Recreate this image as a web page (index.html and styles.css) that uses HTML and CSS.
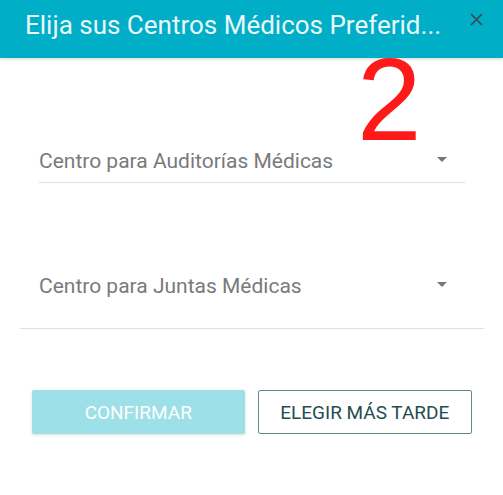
FILE: index.html
```html
<!DOCTYPE html>
<html lang="es">
<head>
<meta charset="utf-8">
<title>Centros Médicos</title>
<link rel="stylesheet" href="styles.css">
</head>
<body>
<div class="dialog">
  <header class="bar">
    <h1 class="title">Elija sus Centros Médicos Preferid...</h1>
    <button class="close" aria-label="Cerrar">
      <svg width="13" height="13" viewBox="0 0 13 13"><path d="M1 1 L12 12 M12 1 L1 12" stroke="#3d4a4d" stroke-width="1.7" fill="none"/></svg>
    </button>
  </header>
  <span class="annot">2</span>
  <main class="content">
    <div class="field field-first">
      <span class="placeholder">Centro para Auditorías Médicas</span>
      <svg class="caret" width="10" height="5" viewBox="0 0 10 5"><path d="M0 0 H10 L5 5 Z" fill="#777"/></svg>
    </div>
    <div class="field field-second">
      <span class="placeholder">Centro para Juntas Médicas</span>
      <svg class="caret" width="10" height="5" viewBox="0 0 10 5"><path d="M0 0 H10 L5 5 Z" fill="#777"/></svg>
    </div>
    <div class="actions">
      <button class="btn btn-primary">CONFIRMAR</button>
      <button class="btn btn-outline">ELEGIR MÁS TARDE</button>
    </div>
  </main>
</div>
</body>
</html>
```
FILE: styles.css
```css
html, body {
  margin: 0;
  padding: 0;
  background: #fff;
}
body {
  font-family: Roboto, "Noto Sans", sans-serif;
}
.dialog {
  position: relative;
  width: 503px;
  min-height: 495px;
  background: #fff;
}
.bar {
  height: 58px;
  background: #00aec7;
  display: flex;
  align-items: center;
  padding: 0 20px 0 25px;
  box-sizing: border-box;
  box-shadow: 0 1px 3px rgba(0,0,0,0.18);
  position: relative;
  z-index: 1;
}
.title {
  margin: 0;
  flex: 1;
  font-weight: 400;
  font-size: 26px;
  line-height: 30px;
  color: #e9f7f9;
  white-space: nowrap;
  margin-top: -8px;
}
.close {
  border: 0;
  background: none;
  padding: 0;
  width: 13px;
  height: 13px;
  margin-top: -20px;
  display: flex;
}
.annot {
  position: absolute;
  left: 357px;
  top: 42px;
  z-index: 2;
  font-family: "Liberation Sans", Arial, sans-serif;
  font-size: 116px;
  line-height: 1;
  color: #ff1a1a;
}
.content {
  display: flex;
  flex-direction: column;
}
.field {
  display: flex;
  justify-content: space-between;
  align-items: flex-start;
  border-bottom: 1px solid #e0e0e0;
}
.placeholder {
  font-size: 21px;
  line-height: 24px;
  color: #7a7a7a;
}
.caret {
  margin-top: 8px;
}
.field-first {
  margin: 91px 38px 0 39px;
  padding: 0 18px 9px 0;
}
.field-second {
  margin: 91px 19px 0 20px;
  padding: 0 37px 30px 19px;
}
.actions {
  display: flex;
  gap: 13px;
  margin: 61px 31px 0 32px;
}
.btn {
  height: 44px;
  flex: 1;
  font-family: Roboto, "Noto Sans", sans-serif;
  font-size: 19px;
  border-radius: 2px;
  padding: 0;
}
.btn-primary {
  background: #9de0e8;
  color: #fff;
  border: 0;
  box-shadow: 0 1px 3px rgba(0,0,0,0.15);
}
.btn-outline {
  background: #fff;
  color: #1f4d53;
  border: 1px solid #5f8b90;
}
```
